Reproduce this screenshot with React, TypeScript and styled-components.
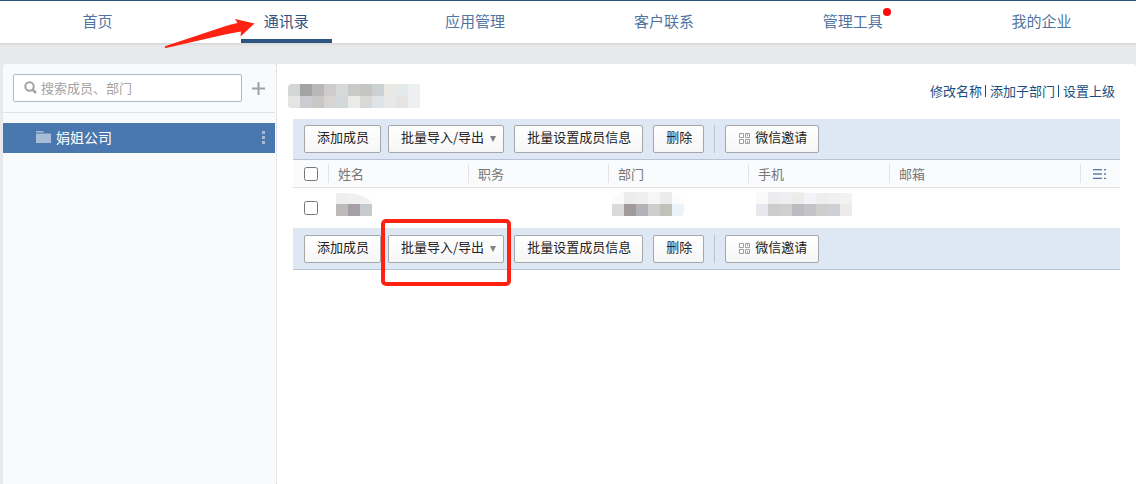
import React from "react";
import styled, { createGlobalStyle, css } from "styled-components";

const GlobalStyle = createGlobalStyle`
  *, *::before, *::after { box-sizing: border-box; }
  body {
    margin: 0;
    background: #e8e9eb;
    color: #222;
    font: 13px/20px "Noto Sans CJK SC", sans-serif;
  }
  button, input { font: inherit; color: inherit; }
  a { text-decoration: none; }
`;

const Page = styled.div`
  display: flex;
  flex-direction: column;
  min-height: 100vh;
`;

const TopNav = styled.nav`
  display: grid;
  grid-template-columns: repeat(6, 1fr);
  padding-left: 3px;
  height: 44px;
  background: #fff;
  border-top: 1px solid #2e527f;
  border-bottom: 1px solid #d6dadd;
  box-shadow: 0 1px 2px rgba(0, 0, 0, 0.06);
`;

const NavCell = styled.div`
  position: relative;
  display: flex;
  justify-content: center;
`;

const NavLink = styled.a<{ $active?: boolean }>`
  position: relative;
  padding: 0 23px;
  border-bottom: 4px solid transparent;
  color: #4f74a3;
  font-size: 15px;
  line-height: 40px;
  height: 42px;
  ${(p) =>
    p.$active &&
    css`
      color: #2e527f;
      border-bottom-color: #2e5481;
    `}
`;

const Dot = styled.span`
  position: absolute;
  top: 7px;
  right: 15px;
  width: 8px;
  height: 8px;
  border-radius: 50%;
  background: #fe0b0b;
`;

const Arrow = styled.svg`
  position: absolute;
  z-index: 2;
  top: 16px;
  right: 126px;
`;

const Panel = styled.div`
  flex: 1;
  display: flex;
  margin: 20px 0 0 3px;
  background: #fff;
  border-radius: 4px 4px 0 0;
  overflow: hidden;
`;

const Sidebar = styled.aside`
  flex: none;
  width: 274px;
  padding-right: 1px;
  background: #f9fafc;
  border-right: 1px dotted #ccd3da;
`;

const SearchRow = styled.div`
  display: flex;
  align-items: center;
  gap: 9px;
  padding: 10px 9px 10px 10px;
  border-bottom: 1px solid #e1e4e7;
`;

const SearchBox = styled.label`
  flex: 1;
  display: flex;
  align-items: center;
  gap: 4px;
  height: 28px;
  padding: 0 10px 1px;
  background: #fff;
  border: 1px solid #aebac7;
  border-radius: 2px;
`;

const SearchInput = styled.input`
  flex: 1;
  min-width: 0;
  padding: 0;
  border: 0;
  outline: 0;
  background: none;
  &::placeholder { color: #a3a3a3; opacity: 1; }
`;

const IconButton = styled.button`
  display: flex;
  padding: 0;
  border: 0;
  background: none;
`;

const Company = styled.div`
  display: flex;
  align-items: center;
  height: 30px;
  margin-top: 10px;
  padding: 0 9px 2px 33px;
  background: #4a77ad;
`;

const CompanyLink = styled.a`
  flex: 1;
  display: flex;
  align-items: center;
  gap: 5px;
  color: #fff;
  font-size: 14px;
`;

const Main = styled.main`
  flex: 1;
  min-width: 0;
  padding: 20px 16px 0;
`;

const TitleRow = styled.header`
  display: flex;
  justify-content: space-between;
  align-items: flex-start;
  height: 35px;
  padding-right: 5px;
`;

const Title = styled.h1`
  display: flex;
  margin: 0 0 0 -5px;
`;

const LinkList = styled.div`
  display: flex;
  align-items: center;
  line-height: 14px;
`;

const ActionLink = styled.a`
  color: #1c4d7d;
  & + & {
    display: flex;
    align-items: center;
  }
  & + &::before {
    content: "";
    width: 1px;
    height: 12px;
    margin: 0 4px 0 3px;
    background: #1c4d7d;
  }
`;

const Toolbar = styled.div`
  display: flex;
  gap: 10px;
  padding: 6px 11px;
  background: #dee8f4;
  border-bottom: 1px solid #b8c4d3;
`;

const ButtonPair = styled.div`
  display: flex;
  gap: 7px;
`;

const ToolButton = styled.button`
  display: flex;
  align-items: center;
  height: 28px;
  padding: 0 11px 4px 12px;
  border: 1px solid #a6a7a9;
  border-radius: 2px;
  background: linear-gradient(#fff, #f6f6f6);
  white-space: nowrap;
`;

const Caret = styled.span`
  width: 0;
  margin: 4px -4px 0 6px;
  border: solid transparent;
  border-width: 6px 3px 0;
  border-top-color: #808080;
`;

const Separator = styled.span`
  width: 1px;
  background: #b8c4d3;
`;

const Marked = styled.div<{ $on?: boolean }>`
  position: relative;
  ${(p) =>
    p.$on &&
    css`
      &::after {
        content: "";
        position: absolute;
        inset: -16px -7px -23px;
        border: 4px solid #ff2213;
        border-radius: 5px;
        pointer-events: none;
      }
    `}
`;

const Table = styled.table`
  width: 100%;
  table-layout: fixed;
  border-collapse: separate;
  border-spacing: 0;
`;

const HeadCell = styled.th`
  height: 28px;
  padding: 0;
  background: #f9fbfd;
  border-bottom: 1px solid #e1e4e7;
  color: #777;
  font-weight: 400;
  text-align: left;
`;

const HeadLabel = styled.div<{ $wide?: boolean }>`
  display: flex;
  align-items: center;
  height: 19px;
  line-height: 18px;
  padding-left: ${(p) => (p.$wide ? 12 : 9)}px;
  border-left: 1px solid #e1e4e7;
`;

const Cell = styled.td`
  height: 41px;
  padding: 0;
  border-bottom: 1px solid #e1e4e7;
`;

const Check = styled.input`
  display: block;
  width: 14px;
  height: 14px;
  margin: 0 0 0 11px;
`;

const CellMosaic = styled.div<{ $shift: number }>`
  margin: -8px 0 0 ${(p) => p.$shift}px;
  svg { display: block; }
`;

const PIXEL = 12;

function Mosaic({ rows, outline }: { rows: string[][]; outline?: string }) {
  return (
    <svg width={rows[0].length * PIXEL} height={rows.length * PIXEL} shapeRendering="crispEdges"
      aria-hidden="true" style={outline ? { clipPath: outline } : undefined}>
      {rows.map((row, y) =>
        row.map((fill, x) => (
          <rect key={`${x}-${y}`} x={x * PIXEL} y={y * PIXEL} width={PIXEL} height={PIXEL} fill={fill} />
        )),
      )}
    </svg>
  );
}

const titlePixels = [
  ["#d4d6d5", "#a2a5a3", "#b8b8b8", "#cfcbcd", "#d5d9d8", "#c9c9c7", "#c6c5c3", "#cbd0d3", "#ebe7e2", "#e4e9eb", "#edeff1"],
  ["#e4e4e4", "#cbcbd1", "#c8c9c7", "#d8d4d4", "#d3d9da", "#eaeae8", "#d9d8d6", "#dfe4e8", "#e7e8ea", "#e5e4e2", "#edeff1"],
];
const namePixels = [
  ["#eeeeee", "#eff0f0", "#f1f1f1"],
  ["#bcbbba", "#a5a0a5", "#c6cbce"],
];
const departmentPixels = [
  ["#fafafa", "#ececed", "#efeff0", "#f6f6f6", "#ebebea", "#fafcfe"],
  ["#dadad9", "#a09a9a", "#b3b2b8", "#cdcfce", "#c1c0b9", "#eaf2fa"],
];
const phonePixels = [
  ["#f9f9f9", "#ececee", "#eeeff1", "#ececeb", "#f3f4f7", "#efeeec", "#f0f0f1", "#f1f2f1"],
  ["#e7e8ed", "#cdcccb", "#cfcfcf", "#bcbbbf", "#c5c3c8", "#cecece", "#cfd0d6", "#edebea"],
];

const QrSvg = styled.svg`
  margin: 2px 5px 0 0;
`;

function QrIcon() {
  return (
    <QrSvg width="12" height="11" viewBox="-1 0 12 11" fill="none" stroke="#a0a0a0" aria-hidden="true">
      <path d="M.5.5h4v4h-4zM6.500.5h4v4h-4zM.5 6.500h4v4h-4zM6.500 6.500h4v4h-4z" />
      <path d="M8.500 0v3M8.500 8v3" />
    </QrSvg>
  );
}

function ActionBar({ marked }: { marked?: boolean }) {
  return (
    <Toolbar>
      <ButtonPair>
        <ToolButton>添加成员</ToolButton>
        <Marked $on={marked}>
          <ToolButton>
            批量导入/导出
            <Caret />
          </ToolButton>
        </Marked>
      </ButtonPair>
      <ToolButton>批量设置成员信息</ToolButton>
      <ToolButton>删除</ToolButton>
      <Separator />
      <ToolButton>
        <QrIcon />
        微信邀请
      </ToolButton>
    </Toolbar>
  );
}

export default function App() {
  return (
    <Page>
      <GlobalStyle />
      <TopNav>
        <NavCell><NavLink href="#home">首页</NavLink></NavCell>
        <NavCell>
          <NavLink href="#contacts" $active>通讯录</NavLink>
          <Arrow width="92" height="34" viewBox="0 0 92 34" aria-hidden="true">
            <path d="M2 29.300L62 9.200Q68 7.300 74.500 6L72 2L91.500 6.500L77.500 19.500L78 14.500L62 17.500L2 31.200Z" fill="#ff2213" />
          </Arrow>
        </NavCell>
        <NavCell><NavLink href="#apps">应用管理</NavLink></NavCell>
        <NavCell><NavLink href="#customers">客户联系</NavLink></NavCell>
        <NavCell><NavLink href="#tools">管理工具<Dot /></NavLink></NavCell>
        <NavCell><NavLink href="#company">我的企业</NavLink></NavCell>
      </TopNav>
      <Panel>
        <Sidebar>
          <SearchRow>
            <SearchBox>
              <svg width="13" height="13" viewBox="0 0 13 13" fill="none" stroke="#a3a3a3" strokeWidth="2" aria-hidden="true">
                <circle cx="5.500" cy="5.500" r="4.200" />
                <path d="M8.500 8.500L12 12" strokeWidth="2.500" />
              </svg>
              <SearchInput type="text" placeholder="搜索成员、部门" aria-label="搜索成员、部门" />
            </SearchBox>
            <IconButton aria-label="添加">
              <svg width="15" height="15" viewBox="0 0 15 15" stroke="#a0a0a0" strokeWidth="2" aria-hidden="true">
                <path d="M1 7.500h13M7.500 1v13" />
              </svg>
            </IconButton>
          </SearchRow>
          <Company>
            <CompanyLink href="#company-root">
              <svg width="15" height="12" viewBox="0 0 15 12" fill="#a8bcd8" aria-hidden="true">
                <path d="M0 0h7l1 1.500H0zM0 2.500h15V12H0z" />
              </svg>
              娟姐公司
            </CompanyLink>
            <IconButton aria-label="更多">
              <svg width="5" height="15" viewBox="0 0 5 15" fill="#a8bcd8" aria-hidden="true">
                <path d="M1 1h3v3H1zM1 6h3v3H1zM1 11h3v3H1z" />
              </svg>
            </IconButton>
          </Company>
        </Sidebar>
        <Main>
          <TitleRow>
            <Title><Mosaic rows={titlePixels} outline="inset(0 round 4px 0 0 3px)" /></Title>
            <LinkList>
              <ActionLink href="#rename">修改名称</ActionLink>
              <ActionLink href="#add-sub">添加子部门</ActionLink>
              <ActionLink href="#set-parent">设置上级</ActionLink>
            </LinkList>
          </TitleRow>
          <ActionBar />
          <Table>
            <colgroup>
              <col style={{ width: 35 }} />
              <col style={{ width: 140 }} />
              <col style={{ width: 140 }} />
              <col style={{ width: 140 }} />
              <col style={{ width: 141 }} />
              <col />
              <col style={{ width: 40 }} />
            </colgroup>
            <thead>
              <tr>
                <HeadCell><Check type="checkbox" aria-label="全选" /></HeadCell>
                <HeadCell><HeadLabel>姓名</HeadLabel></HeadCell>
                <HeadCell><HeadLabel>职务</HeadLabel></HeadCell>
                <HeadCell><HeadLabel>部门</HeadLabel></HeadCell>
                <HeadCell><HeadLabel>手机</HeadLabel></HeadCell>
                <HeadCell><HeadLabel>邮箱</HeadLabel></HeadCell>
                <HeadCell>
                  <HeadLabel $wide>
                    <IconButton aria-label="设置列">
                      <svg width="13" height="10" viewBox="0 0 13 10" fill="#5577a6" aria-hidden="true">
                        <path d="M0 0h9v1H0zM11 0h2v1h-2zM0 9h9v1H0zM11 9h2v1h-2z" />
                        <path d="M0 4h9v2H0zM11 4h2v2h-2z" opacity=".7" />
                        <path d="M0 1h9v1H0zM11 1h2v1h-2zM0 8h9v1H0zM11 8h2v1h-2z" opacity=".3" />
                      </svg>
                    </IconButton>
                  </HeadLabel>
                </HeadCell>
              </tr>
            </thead>
            <tbody>
              <tr>
                <Cell><Check type="checkbox" aria-label="选择成员" /></Cell>
                <Cell>
                  <CellMosaic $shift={8}>
                    <Mosaic rows={namePixels} outline="inset(1px 0 0 0 round 0 28px 0 0 / 0 12px 0 0)" />
                  </CellMosaic>
                </Cell>
                <Cell />
                <Cell>
                  <CellMosaic $shift={4}>
                    <Mosaic rows={departmentPixels} outline="inset(0 round 14px 14px 4px 0)" />
                  </CellMosaic>
                </Cell>
                <Cell>
                  <CellMosaic $shift={8}>
                    <Mosaic rows={phonePixels} outline="polygon(0 0, 36px 0, 56px 1px, 94px 1px, 100% 3px, 100% 100%, 0 100%)" />
                  </CellMosaic>
                </Cell>
                <Cell />
                <Cell />
              </tr>
            </tbody>
          </Table>
          <ActionBar marked />
        </Main>
      </Panel>
    </Page>
  );
}
